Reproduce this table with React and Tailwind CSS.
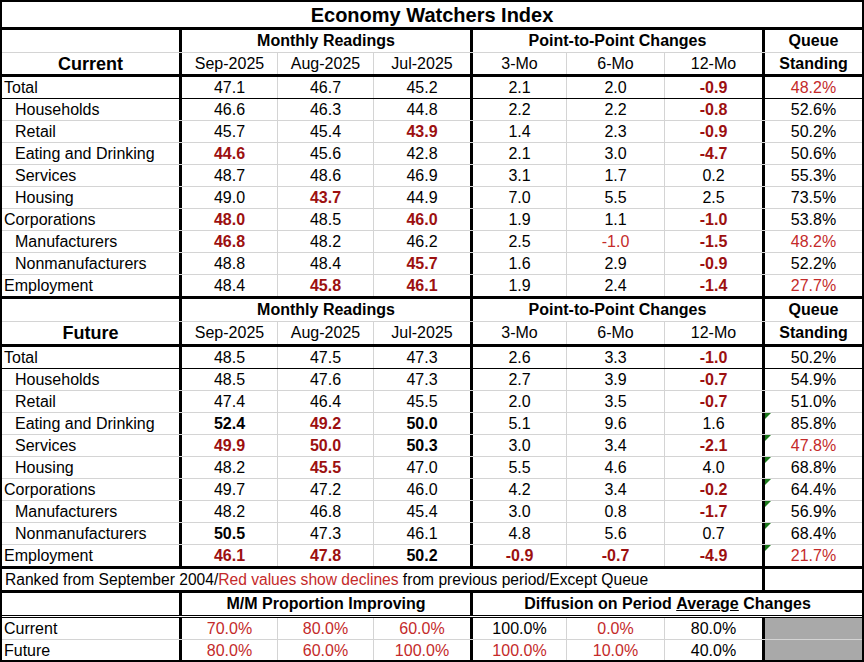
import React from "react";

const W = ["w-[180px]", "w-[96px]", "w-[96px]", "w-[99px]", "w-[94px]", "w-[98px]", "w-[100px]", "w-[97px]"];
const RB = [
  "border-r-[3px] border-r-black",
  "border-r border-r-[#d4d4d4]",
  "border-r border-r-[#d4d4d4]",
  "border-r-[3px] border-r-black",
  "border-r border-r-[#d4d4d4]",
  "border-r border-r-[#d4d4d4]",
  "border-r-[3px] border-r-black",
  "",
];

function styleOf(s) {
  if (s.startsWith("!")) return [s.slice(1), "font-bold text-[#9c1010]"];
  if (s.startsWith("~")) return [s.slice(1), "text-[#c42a2a]"];
  if (s.startsWith("*")) return [s.slice(1), "font-bold text-black"];
  return [s, "text-black"];
}

const current = [
  ["Total", 0, ["47.1", "46.7", "45.2", "2.1", "2.0", "!-0.9", "~48.2%"]],
  ["Households", 1, ["46.6", "46.3", "44.8", "2.2", "2.2", "!-0.8", "52.6%"]],
  ["Retail", 1, ["45.7", "45.4", "!43.9", "1.4", "2.3", "!-0.9", "50.2%"]],
  ["Eating and Drinking", 1, ["!44.6", "45.6", "42.8", "2.1", "3.0", "!-4.7", "50.6%"]],
  ["Services", 1, ["48.7", "48.6", "46.9", "3.1", "1.7", "0.2", "55.3%"]],
  ["Housing", 1, ["49.0", "!43.7", "44.9", "7.0", "5.5", "2.5", "73.5%"]],
  ["Corporations", 0, ["!48.0", "48.5", "!46.0", "1.9", "1.1", "!-1.0", "53.8%"]],
  ["Manufacturers", 1, ["!46.8", "48.2", "46.2", "2.5", "~-1.0", "!-1.5", "~48.2%"]],
  ["Nonmanufacturers", 1, ["48.8", "48.4", "!45.7", "1.6", "2.9", "!-0.9", "52.2%"]],
  ["Employment", 0, ["48.4", "!45.8", "!46.1", "1.9", "2.4", "!-1.4", "~27.7%"]],
];

const future = [
  ["Total", 0, ["48.5", "47.5", "47.3", "2.6", "3.3", "!-1.0", "50.2%"]],
  ["Households", 1, ["48.5", "47.6", "47.3", "2.7", "3.9", "!-0.7", "54.9%"]],
  ["Retail", 1, ["47.4", "46.4", "45.5", "2.0", "3.5", "!-0.7", "51.0%"]],
  ["Eating and Drinking", 1, ["*52.4", "!49.2", "*50.0", "5.1", "9.6", "1.6", "85.8%"], true],
  ["Services", 1, ["!49.9", "!50.0", "*50.3", "3.0", "3.4", "!-2.1", "~47.8%"], true],
  ["Housing", 1, ["48.2", "!45.5", "47.0", "5.5", "4.6", "4.0", "68.8%"], true],
  ["Corporations", 0, ["49.7", "47.2", "46.0", "4.2", "3.4", "!-0.2", "64.4%"], true],
  ["Manufacturers", 1, ["48.2", "46.8", "45.4", "3.0", "0.8", "!-1.7", "56.9%"], true],
  ["Nonmanufacturers", 1, ["*50.5", "47.3", "46.1", "4.8", "5.6", "0.7", "68.4%"], true],
  ["Employment", 0, ["!46.1", "!47.8", "*50.2", "!-0.9", "!-0.7", "!-4.9", "~21.7%"], true],
];

function DataRow({ row, idx, last }) {
  const [label, indent, vals, tri] = row;
  let rowB = "h-[22px] border-b border-b-[#d4d4d4]";
  if (idx === 0) rowB = "h-[22px] border-b border-b-black";
  if (last) rowB = "h-[24px] border-b-[3px] border-b-black";
  return (
    <div className={`flex ${rowB}`}>
      <div className={`${W[0]} ${RB[0]} flex items-center ${indent ? "pl-[13px]" : "pl-[2px]"} whitespace-nowrap`}>
        {label}
      </div>
      {vals.map((v, i) => {
        const [t, c] = styleOf(v);
        return (
          <div key={i} className={`${W[i + 1]} ${RB[i + 1]} relative flex items-center justify-center ${c}`}>
            {i === 6 && tri ? (
              <span className="absolute left-0 top-0 w-0 h-0 border-t-[6px] border-t-[#1d7a1d] border-r-[6px] border-r-transparent" />
            ) : null}
            {t}
          </div>
        );
      })}
    </div>
  );
}

function Header({ title, h2 }) {
  return (
    <>
      <div className="flex h-[23px] border-b border-b-[#d4d4d4]">
        <div className={`${W[0]} ${RB[0]}`} />
        <div className="w-[291px] border-r-[3px] border-r-black flex items-center justify-center font-bold">
          Monthly Readings
        </div>
        <div className="w-[292px] border-r-[3px] border-r-black flex items-center justify-center font-bold">
          Point-to-Point Changes
        </div>
        <div className={`${W[7]} flex items-center justify-center font-bold`}>Queue</div>
      </div>
      <div className={`flex ${h2} border-b-[3px] border-b-black`}>
        <div className={`${W[0]} ${RB[0]} flex items-center justify-center font-bold text-[18px]`}>{title}</div>
        {["Sep-2025", "Aug-2025", "Jul-2025", "3-Mo", "6-Mo", "12-Mo"].map((t, i) => (
          <div key={t} className={`${W[i + 1]} ${RB[i + 1]} flex items-center justify-center`}>
            {t}
          </div>
        ))}
        <div className={`${W[7]} flex items-center justify-center font-bold`}>Standing</div>
      </div>
    </>
  );
}

function BottomRow({ label, vals, h }) {
  return (
    <div className={`flex ${h} ${label === "Current" ? "border-b border-b-[#d4d4d4]" : ""}`}>
      <div className={`${W[0]} ${RB[0]} flex items-center pl-[2px]`}>{label}</div>
      {vals.map((v, i) => {
        const [t, c] = styleOf(v);
        return (
          <div key={i} className={`${W[i + 1]} ${RB[i + 1]} flex items-center justify-center ${c}`}>
            {t}
          </div>
        );
      })}
      <div className={`${W[7]} bg-[#a9a9a9]`} />
    </div>
  );
}

export default function App() {
  return (
    <div
      className="w-[864px] h-[662px] border-2 border-black bg-white text-black text-[16px] leading-none overflow-hidden"
      style={{ fontFamily: '"Liberation Sans", Arial, sans-serif' }}
    >
      <div className="h-[28px] border-b-[3px] border-b-black flex items-center justify-center font-bold text-[20px]">
        Economy Watchers Index
      </div>
      <Header title="Current" h2="h-[24px]" />
      {current.map((r, i) => (
        <DataRow key={r[0]} row={r} idx={i} last={i === current.length - 1} />
      ))}
      <Header title="Future" h2="h-[25px]" />
      {future.map((r, i) => (
        <DataRow key={r[0]} row={r} idx={i} last={i === future.length - 1} />
      ))}
      <div className="flex h-[24px] border-b-[3px] border-b-black">
        <div className="w-[763px] border-r-[3px] border-r-black flex items-center pl-[3px] whitespace-nowrap text-[15.6px]">
          Ranked from September 2004/<span className="text-[#c42a2a]">Red values show declines</span>&nbsp;from previous period/Except Queue
        </div>
        <div className={W[7]} />
      </div>
      <div className="flex h-[25px] border-b-[3px] border-double border-b-black">
        <div className={`${W[0]} ${RB[0]}`} />
        <div className="w-[291px] border-r-[3px] border-r-black flex items-center justify-center font-bold">
          M/M Proportion Improving
        </div>
        <div className="w-[389px] flex items-center justify-center font-bold">
          Diffusion on Period&nbsp;<span className="underline">Average</span>&nbsp;Changes
        </div>
      </div>
      <BottomRow label="Current" h="h-[22px]" vals={["~70.0%", "~80.0%", "~60.0%", "100.0%", "~0.0%", "80.0%"]} />
      <BottomRow label="Future" h="h-[21px]" vals={["~80.0%", "~60.0%", "~100.0%", "~100.0%", "~10.0%", "40.0%"]} />
    </div>
  );
}
